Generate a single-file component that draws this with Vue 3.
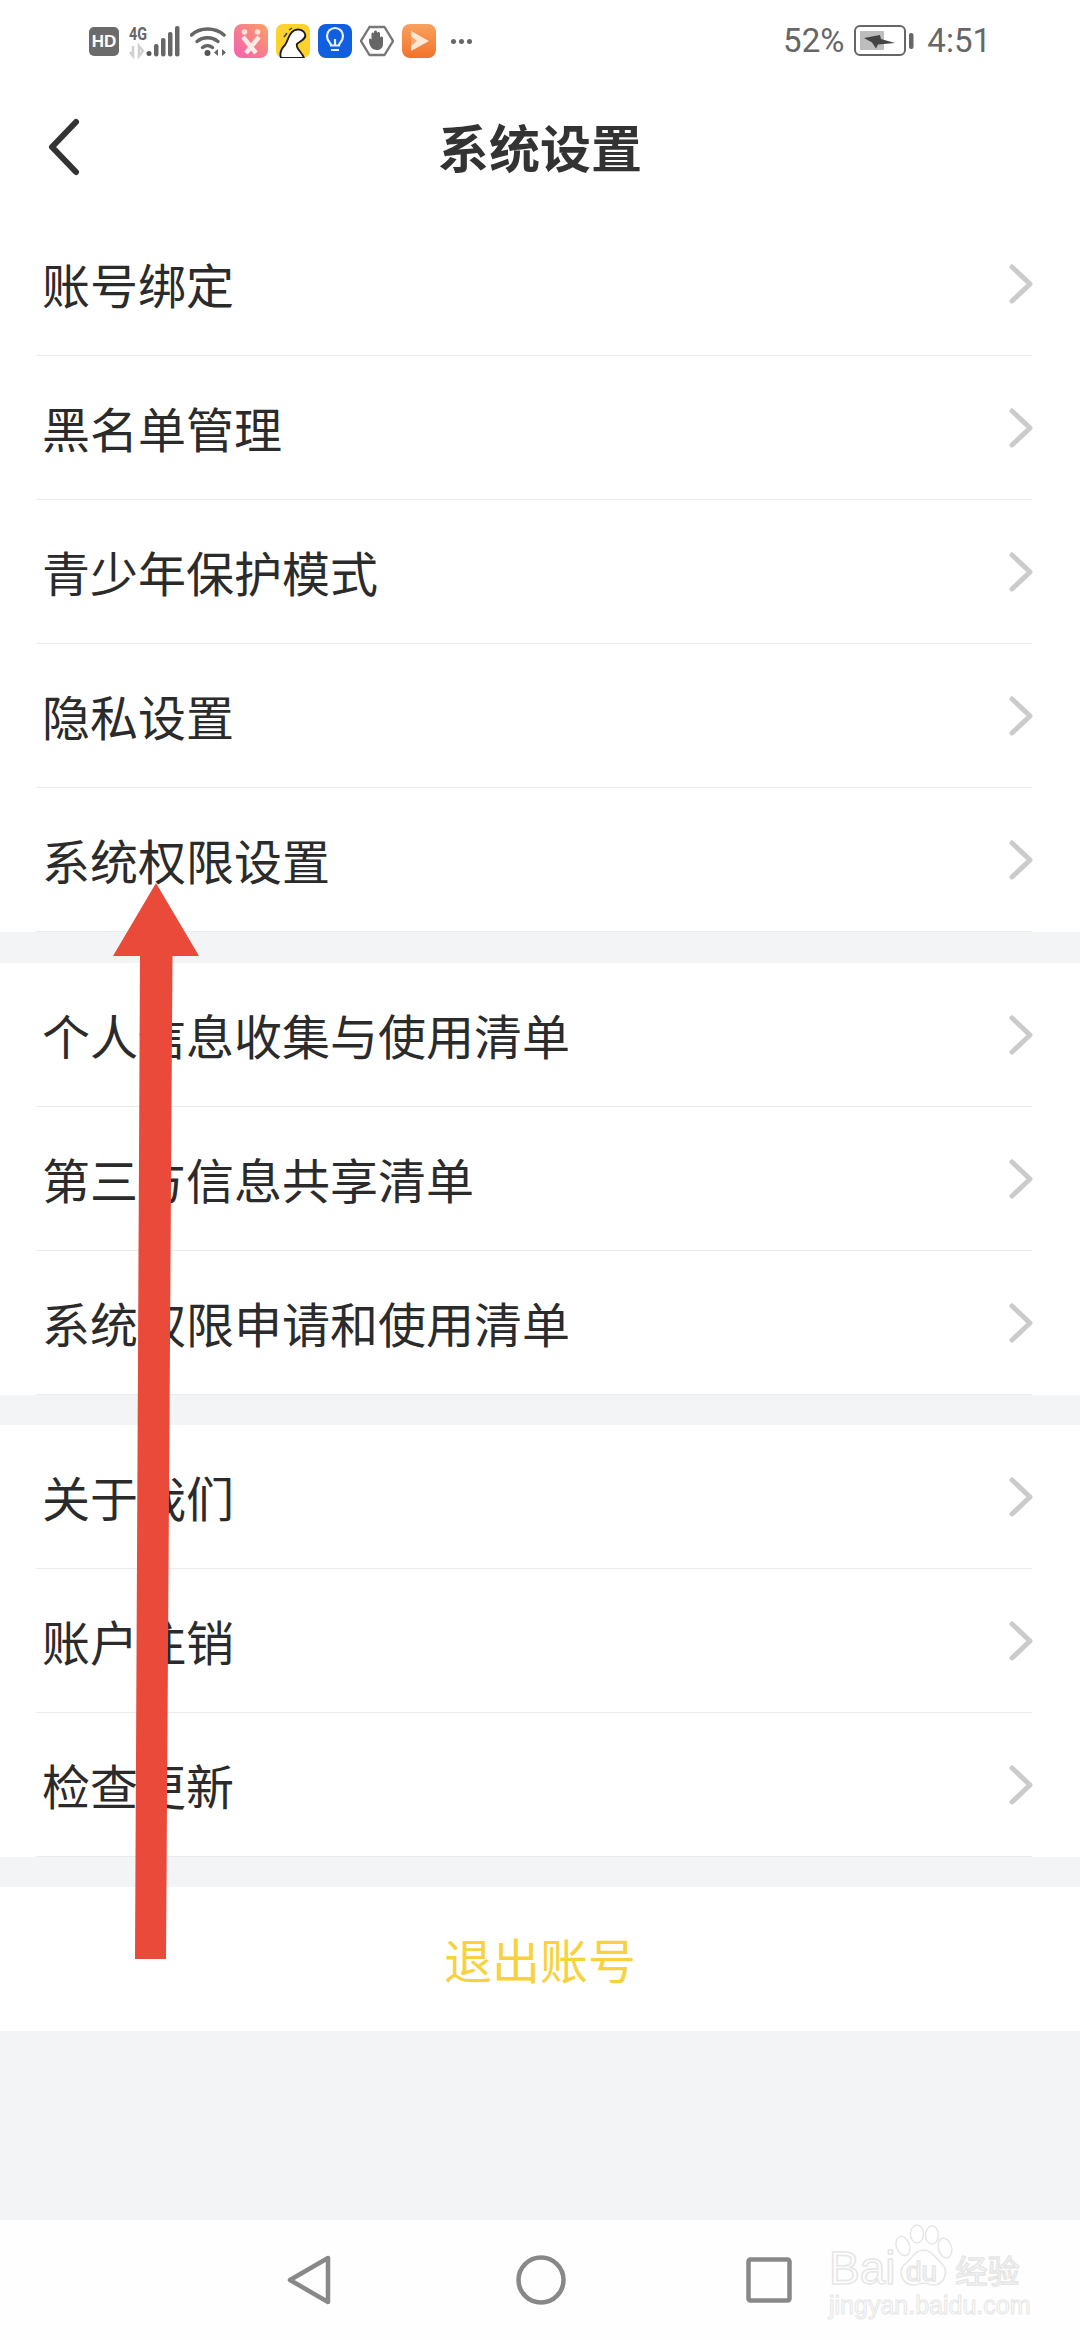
<script setup>
const groups = [
  ['账号绑定', '黑名单管理', '青少年保护模式', '隐私设置', '系统权限设置'],
  ['个人信息收集与使用清单', '第三方信息共享清单', '系统权限申请和使用清单'],
  ['关于我们', '账户注销', '检查更新']
]
</script>

<template>
  <div class="page">
    <div class="status">
      <div class="status-left">
        <div class="hd">HD</div>
        <svg class="signal" width="51" height="31" viewBox="0 0 51 31">
          <text x="0" y="14" textLength="18" lengthAdjust="spacingAndGlyphs" class="g-text">4G</text>
          <path d="M4 20v10L1 26M10 20v10l4-5z" stroke="#cfcfcf" stroke-width="2.500" fill="none" />
          <circle cx="20" cy="27.500" r="2.500" fill="#555" />
          <rect x="25" y="18" width="4.500" height="12.500" rx="2" fill="#666" />
          <rect x="32" y="12" width="4.500" height="18.500" rx="2" fill="#666" />
          <rect x="39" y="6" width="4.500" height="24.500" rx="2" fill="#666" />
          <rect x="46" y="0" width="4.500" height="30.500" rx="2" fill="#666" />
        </svg>
        <svg class="wifi" width="38" height="32" viewBox="0 0 38 32">
          <g fill="none" stroke="#666" stroke-width="3.500" stroke-linecap="round">
            <path d="M1.500 10C10 2 25 2 34 10" />
            <path d="M7 16.500c6-5 15-5 21 0" />
            <path d="M12.500 22.500c3-2.500 7-2.500 10 0" />
          </g>
          <circle cx="17.500" cy="28" r="3" fill="#555" />
          <path d="M28 24v7l-4-3.500zM32 24v7l4-3.500z" fill="#666" />
        </svg>
        <svg class="app" width="34" height="34" viewBox="0 0 34 34">
          <defs>
            <linearGradient id="pinkGrad" x1="1" y1="0" x2="0" y2="1">
              <stop offset="0" stop-color="#f9a062" />
              <stop offset="1" stop-color="#f55fb4" />
            </linearGradient>
          </defs>
          <rect width="34" height="34" rx="8" fill="url(#pinkGrad)" />
          <path d="M9 13l13 16M25 13L12 29" stroke="#fde9e6" stroke-width="4.500" fill="none" />
          <circle cx="10.500" cy="8" r="2.800" fill="#fde0d8" />
          <circle cx="23.500" cy="8" r="2.800" fill="#fde0d8" />
        </svg>
        <svg class="app" width="34" height="34" viewBox="0 0 34 34">
          <rect width="34" height="34" rx="7" fill="#fdd22c" />
          <path d="M5 34C3 28 6 24 9 21 12 17 12 12 16 8 20 4 27 5 29 10 31 15 24 17 21 20 19 24 26 28 28 34z" fill="#fff" stroke="#1c1c1c" stroke-width="1.800" />
          <path d="M8 13l3-4M13 6l3-2" stroke="#444" stroke-width="1.500" />
        </svg>
        <svg class="app" width="34" height="34" viewBox="0 0 34 34">
          <rect width="34" height="34" rx="8" fill="#0f5fe0" />
          <path d="M13 21.500c0-3-4-4-4-9.500a8 8 0 0 1 16 0c0 5.500-4 6.500-4 9.500z" fill="none" stroke="#e8f0ff" stroke-width="2.200" />
          <path d="M13 26h8M17 21v-6" stroke="#e8f0ff" stroke-width="2.200" />
        </svg>
        <svg class="app" width="34" height="34" viewBox="0 0 34 34">
          <path d="M9.500 3h15L33 17l-8.500 14h-15L1 17z" fill="none" stroke="#777" stroke-width="2.400" stroke-linejoin="round" />
          <path d="M9 16c0-2 2-2 2.500 0V10c0-2 2.500-2 2.500 0V8c0-2 3-2 3 0v1.500c0-2 3-2 3 0V14c0-2 3-2 3 0v6c0 4-3 6-6 6-5 0-8-4-8-10z" fill="#666" />
        </svg>
        <svg class="app" width="34" height="34" viewBox="0 0 34 34">
          <defs>
            <linearGradient id="orangeGrad" x1="0" y1="0" x2="0" y2="1">
              <stop offset="0" stop-color="#f9a25e" />
              <stop offset="1" stop-color="#f2722b" />
            </linearGradient>
          </defs>
          <rect width="34" height="34" rx="8" fill="url(#orangeGrad)" />
          <path d="M9 7l18 10L9 27z" fill="#fde8d8" />
          <path d="M9 12l6 5-6 5z" fill="#f9a872" />
        </svg>
        <div class="dots"><i></i><i></i><i></i></div>
      </div>
      <div class="status-right">
        <span class="percent">52%</span>
        <svg class="battery" width="60" height="31" viewBox="0 0 60 31">
          <rect x="1" y="1" width="50" height="29" rx="5" fill="none" stroke="#666" stroke-width="2" />
          <rect x="6" y="6" width="24" height="19" rx="1" fill="#bdbdbd" />
          <path d="M10 13l16-3 1 4 14 4-17 1.500-2 4-4-6z" fill="#444" />
          <rect x="55" y="8" width="4.500" height="16" rx="2" fill="#666" />
        </svg>
        <span>4:51</span>
      </div>
    </div>

    <header class="nav-bar">
      <svg class="back" width="36" height="58" viewBox="0 0 36 58">
        <path d="M31 4L7 29l24 25" fill="none" stroke="#333" stroke-width="6" stroke-linecap="round" stroke-linejoin="round" />
      </svg>
      <h1>系统设置</h1>
    </header>

    <section v-for="(items, i) in groups" :key="i" class="group">
      <div v-for="item in items" :key="item" class="row">
        <span>{{ item }}</span>
        <svg class="chevron" width="26" height="42" viewBox="0 0 26 42">
          <path d="M4 4l18 17L4 38" fill="none" stroke="#cbcbcb" stroke-width="5" stroke-linecap="round" stroke-linejoin="round" />
        </svg>
      </div>
    </section>

    <section class="logout">退出账号</section>

    <div class="spacer"></div>

    <footer class="sys-nav">
      <svg width="44" height="50" viewBox="0 0 44 50">
        <path d="M41 3v44L3 25z" fill="none" stroke="#888" stroke-width="4.500" stroke-linejoin="round" />
      </svg>
      <svg width="50" height="50" viewBox="0 0 50 50">
        <circle cx="25" cy="25" r="22.500" fill="none" stroke="#888" stroke-width="4.500" />
      </svg>
      <svg width="46" height="46" viewBox="0 0 46 46">
        <rect x="2.500" y="2.500" width="41" height="41" rx="2" fill="none" stroke="#888" stroke-width="4.500" />
      </svg>
    </footer>

    <!-- annotation drawn on top of the screenshot -->
    <svg class="arrow" width="100" height="1090" viewBox="0 0 100 1090">
      <path d="M43 0L86 73H59.500L53 1076H22L27 73H0z" fill="#e94a3a" />
    </svg>

    <div class="watermark">
      <div class="wm-logo">
        <span class="wm-bai">Bai</span>
        <svg class="paw" width="58" height="62" viewBox="0 0 58 62">
          <g fill="#fff" stroke="#e6e6e6" stroke-width="1.500">
            <ellipse cx="8" cy="22" rx="6.500" ry="10" transform="rotate(-20 8 22)" />
            <ellipse cx="22" cy="10" rx="6.500" ry="9" />
            <ellipse cx="37" cy="11" rx="6.500" ry="9" />
            <ellipse cx="50" cy="24" rx="6.500" ry="10" transform="rotate(-15 50 24)" />
            <path d="M29 26c8 0 11 8 18 14 7 7 3 21-9 21-4 0-6-2-9-2s-6 2-10 2C7 61 2 47 10 40c7-5 10-14 19-14z" />
          </g>
        </svg>
        <span class="wm-du">du</span>
        <span class="wm-cn">经验</span>
      </div>
      <div class="wm-url">jingyan.baidu.com</div>
    </div>
  </div>
</template>

<style scoped>
.page {
  position: relative;
  width: 1080px;
  height: 2340px;
  display: flex;
  flex-direction: column;
  overflow: hidden;
  background: #f3f4f6;
  font-family: "Noto Sans CJK SC", "Noto Sans", sans-serif;
  color: #333;
}

.status {
  height: 80px;
  flex-shrink: 0;
  background: #fff;
  display: flex;
  justify-content: space-between;
  align-items: center;
  padding: 0 89px 0 89px;
  font-family: Roboto, sans-serif;
  font-size: 33px;
  color: #666;
}

.status-left {
  display: flex;
  align-items: center;
  gap: 8px;
  margin-top: 2px;
}

.hd {
  width: 30px;
  height: 29px;
  margin-right: 2px;
  border-radius: 5px;
  background: #6b6b6b;
  font-family: "Liberation Sans", sans-serif;
  font-size: 17px;
  font-weight: 700;
  line-height: 29px;
  text-align: center;
  color: #fff;
}

.signal {
  margin-right: 2px;
  overflow: visible;
}

.wifi { margin-right: -2px; }

.g-text {
  font-family: Roboto, sans-serif;
  font-size: 19px;
  font-weight: 700;
  fill: #666;
}

.dots {
  display: flex;
  gap: 3px;
  margin-left: 7px;
}

.dots i {
  width: 5px;
  height: 5px;
  border-radius: 50%;
  background: #666;
}

.status-right {
  display: flex;
  align-items: center;
  gap: 7px;
}

.percent { margin-right: 3px; }
.battery { margin-right: 6px; }

.nav-bar {
  height: 132px;
  flex-shrink: 0;
  background: #fff;
  display: flex;
  align-items: center;
  justify-content: center;
  position: relative;
}

.nav-bar h1 {
  margin: 0;
  font-size: 51px;
  font-weight: 700;
  color: #333;
}

.back {
  position: absolute;
  left: 45px;
  top: 38px;
}

.group {
  background: #fff;
  padding: 0 48px 0 36px;
  margin-bottom: 30px;
}

.group:first-of-type {
  margin-bottom: 31px;
}

.row {
  height: 144px;
  box-sizing: border-box;
  border-bottom: 1px solid #ebebeb;
  display: flex;
  align-items: center;
  justify-content: space-between;
  padding: 0 0 1px 6px;
  font-size: 48px;
  color: #2b2b2b;
}

.chevron { margin: 2px -2px 0 0; }

.logout {
  height: 144px;
  flex-shrink: 0;
  box-sizing: border-box;
  padding-bottom: 3px;
  background: #fff;
  display: flex;
  align-items: center;
  justify-content: center;
  font-size: 48px;
  color: #f8d23e;
}

.spacer { flex: 1; }

.sys-nav {
  height: 120px;
  flex-shrink: 0;
  background: #fefefe;
  display: grid;
  grid-template-columns: 331px 235px 226px;
  align-items: center;
  justify-items: end;
}

.arrow {
  position: absolute;
  left: 113px;
  top: 883px;
}

.watermark {
  position: absolute;
  left: 829px;
  top: 2224px;
  color: transparent;
  -webkit-text-stroke: 1.500px #e6e6e6;
  font-family: "Liberation Sans", sans-serif;
}

.wm-logo {
  position: relative;
  display: flex;
  align-items: flex-end;
  height: 62px;
}

.wm-bai {
  font-size: 46px;
  line-height: 36px;
}

.wm-du {
  position: absolute;
  left: 77px;
  bottom: 0;
  font-size: 28px;
  line-height: 28px;
}

.wm-cn {
  font-family: "Noto Sans CJK SC", sans-serif;
  font-size: 32px;
  line-height: 34px;
  margin-left: 2px;
}

.wm-url {
  font-size: 25px;
  line-height: 28px;
  margin-top: 5px;
  -webkit-text-stroke-width: 1px;
}
</style>
